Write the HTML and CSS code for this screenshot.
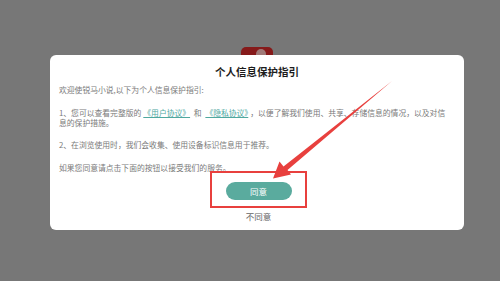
FILE: index.html
```html
<!DOCTYPE html>
<html lang="zh-CN">
  <head>
    <meta charset="UTF-8" />
    <meta name="viewport" content="width=device-width, initial-scale=1.0" />
    <title>个人信息保护指引</title>
    <link rel="stylesheet" href="styles.css">
  </head>
  <body>
    <div class="app-icon"><span class="app-icon-mark"></span></div>
    <div class="dialog">
      <h2 class="dialog-title">个人信息保护指引</h2>
      <p class="dialog-text">欢迎使锐马小说,以下为个人信息保护指引:</p>
      <p class="dialog-text">1、您可以查看完整版的<a class="doc-link" href="#">《用户协议》</a> 和 <a class="doc-link" href="#">《隐私协议》</a>，以便了解我们使用、共享、存储信息的情况，以及对信息的保护措施。</p>
      <p class="dialog-text">2、在浏览使用时，我们会收集、使用设备标识信息用于推荐。</p>
      <p class="dialog-text">如果您同意请点击下面的按钮以接受我们的服务。</p>
      <div class="actions">
        <button class="agree-btn">同意</button>
        <span class="highlight-box"></span>
      </div>
      <div class="disagree">不同意</div>
      <svg class="arrow" width="500" height="281" viewBox="0 0 500 281">
        <polygon points="392,81 287.5,170 291,174.5 273,178.5 279.5,161.5 283.5,166.5" fill="#e8403e" />
      </svg>
    </div>
  </body>
</html>
```

FILE: styles.css
```css
body {
  font-family: "Noto Sans CJK SC", "Noto Sans", sans-serif;
  background-color: #777777;
  margin: 0;
  height: 281px;
  padding-top: 47px;
  box-sizing: border-box;
  overflow: hidden;
}
.app-icon {
  width: 32px;
  height: 8px;
  margin-left: 241px;
  background-color: #861a1a;
  border-radius: 5px 5px 0 0;
  position: relative;
  overflow: hidden;
}
.app-icon-mark {
  position: absolute;
  left: 15px;
  top: 2px;
  width: 10px;
  height: 10px;
  border-radius: 50%;
  background-color: #a07a78;
}
.dialog {
  width: 414px;
  height: 175px;
  margin-left: 50px;
  background-color: #fff;
  border-radius: 6px;
  padding: 12px 14px 0 9px;
  box-sizing: border-box;
}
.dialog-title {
  margin: 0 0 8px;
  padding-left: 5px;
  text-align: center;
  font-size: 10.5px;
  line-height: 10px;
  font-weight: bold;
  color: #1c1c1c;
}
.dialog-text {
  margin: 0 0 12.5px;
  font-size: 7.8px;
  line-height: 10px;
  color: #7a7a7a;
}
.doc-link {
  color: #4fa89f;
  text-decoration: underline;
  padding: 0 2px;
}
.actions {
  display: flex;
  justify-content: center;
  margin-top: -3px;
  padding-left: 8px;
  position: relative;
}
.agree-btn {
  width: 66px;
  height: 18px;
  border: none;
  border-radius: 9px;
  background-color: #5aab9e;
  color: #fff;
  font-family: inherit;
  font-size: 8.5px;
  padding: 0;
}
.highlight-box {
  position: absolute;
  left: 151px;
  top: -11px;
  width: 97px;
  height: 37px;
  border: 2px solid #e8403e;
  box-sizing: border-box;
}
.disagree {
  margin-top: 11px;
  padding-left: 8px;
  text-align: center;
  font-size: 8.5px;
  line-height: 10px;
  color: #666;
}
.arrow {
  position: absolute;
  left: 0;
  top: 0;
}
```
